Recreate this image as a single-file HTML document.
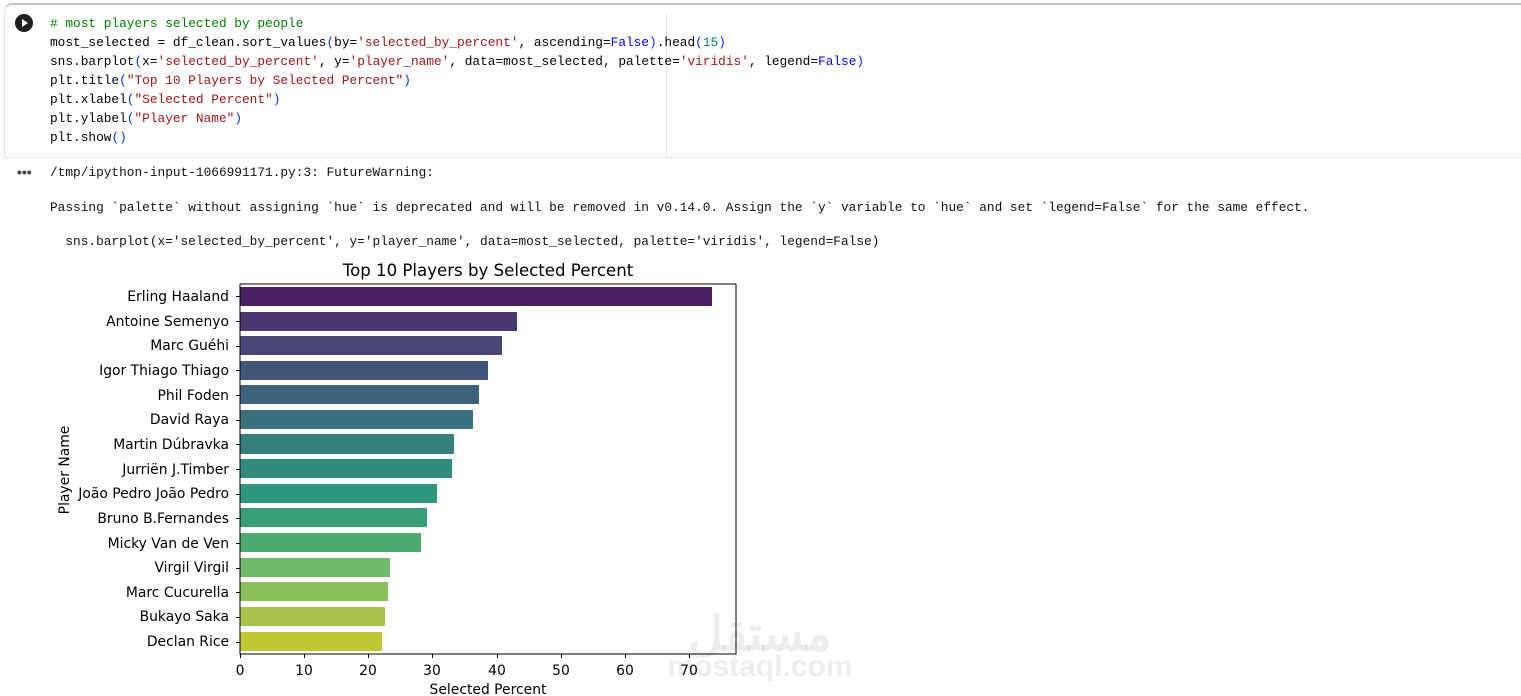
<!DOCTYPE html>
<html><head><meta charset="utf-8"><style>
body{margin:0;width:1521px;height:696px;background:#fff;overflow:hidden;position:relative;font-family:"Liberation Mono",monospace;}
.cell{position:absolute;left:4px;top:3px;width:1530px;height:154px;border-top:2px solid #c4c4c4;border-left:1px solid #e0e0e0;border-radius:8px 0 0 0;}
.sep{position:absolute;left:4px;top:157px;width:1517px;height:1px;background:#e3e3e3}
.vl{position:absolute;left:666px;top:14px;width:1px;height:143px;background:#e0e0e0}
.code{position:absolute;left:50px;top:14px;font-size:12.8px;line-height:19px;white-space:pre;color:#000}
.c{color:#008000}.s{color:#a31515}.k{color:#0000ff}.n{color:#098658}.p{color:#0431fa}
.out{position:absolute;left:50px;font-size:12.8px;white-space:pre;color:#111}
.run{position:absolute;left:15px;top:14px;width:18px;height:18px;border-radius:50%;background:#1f1f1f}
.run:after{content:"";position:absolute;left:7px;top:5px;border-left:6px solid #fff;border-top:4px solid transparent;border-bottom:4px solid transparent}
.dots{position:absolute;left:17px;top:164px;font-size:14px;color:#444;font-family:"Liberation Sans",sans-serif;font-weight:bold}
</style></head><body>
<div class="cell"></div><div class="sep"></div><div class="vl"></div>
<div class="run"></div>
<div class="code"><span class="c"># most players selected by people</span>
most_selected = df_clean.sort_values<span class="p">(</span>by=<span class="s">'selected_by_percent'</span>, ascending=<span class="k">False</span><span class="p">)</span>.head<span class="p">(</span><span class="n">15</span><span class="p">)</span>
sns.barplot<span class="p">(</span>x=<span class="s">'selected_by_percent'</span>, y=<span class="s">'player_name'</span>, data=most_selected, palette=<span class="s">'viridis'</span>, legend=<span class="k">False</span><span class="p">)</span>
plt.title<span class="p">(</span><span class="s">"Top 10 Players by Selected Percent"</span><span class="p">)</span>
plt.xlabel<span class="p">(</span><span class="s">"Selected Percent"</span><span class="p">)</span>
plt.ylabel<span class="p">(</span><span class="s">"Player Name"</span><span class="p">)</span>
plt.show<span class="p">()</span></div>
<div class="dots">•••</div>
<div class="out" style="top:165px">/tmp/ipython-input-1066991171.py:3: FutureWarning:</div>
<div class="out" style="top:200px">Passing `palette` without assigning `hue` is deprecated and will be removed in v0.14.0. Assign the `y` variable to `hue` and set `legend=False` for the same effect.</div>
<div class="out" style="top:234px">  sns.barplot(x='selected_by_percent', y='player_name', data=most_selected, palette='viridis', legend=False)</div>
<svg style="position:absolute;left:0;top:0" width="1521" height="696" font-family="DejaVu Sans, sans-serif" font-size="13.9" fill="#000">
<text x="488" y="276" font-size="16.6" text-anchor="middle">Top 10 Players by Selected Percent</text>
<g>
<rect x="240" y="287" width="472" height="19" fill="#4a2262"/>
<rect x="240" y="312" width="277" height="19" fill="#4a3671"/>
<rect x="240" y="336" width="262" height="19" fill="#494677"/>
<rect x="240" y="361" width="248" height="19" fill="#44557b"/>
<rect x="240" y="385" width="239" height="19" fill="#3e637c"/>
<rect x="240" y="410" width="233" height="19" fill="#3a717d"/>
<rect x="240" y="434" width="214" height="20" fill="#34807e"/>
<rect x="240" y="459" width="212" height="19" fill="#2f8b7d"/>
<rect x="240" y="484" width="197" height="19" fill="#2f977c"/>
<rect x="240" y="508" width="187" height="19" fill="#379f77"/>
<rect x="240" y="533" width="181" height="19" fill="#4eab70"/>
<rect x="240" y="558" width="150" height="19" fill="#6dba67"/>
<rect x="240" y="582" width="148" height="19" fill="#89c05c"/>
<rect x="240" y="607" width="145" height="19" fill="#a5c64a"/>
<rect x="240" y="632" width="142" height="19" fill="#c0c934"/>
</g>
<rect x="240" y="284" width="496" height="370" fill="none" stroke="#000" stroke-width="1"/>
<g text-anchor="end">
<text x="229" y="301">Erling Haaland</text>
<text x="229" y="326">Antoine Semenyo</text>
<text x="229" y="350">Marc Guéhi</text>
<text x="229" y="375">Igor Thiago Thiago</text>
<text x="229" y="400">Phil Foden</text>
<text x="229" y="424">David Raya</text>
<text x="229" y="449">Martin Dúbravka</text>
<text x="229" y="474">Jurriën J.Timber</text>
<text x="229" y="498">João Pedro João Pedro</text>
<text x="229" y="523">Bruno B.Fernandes</text>
<text x="229" y="548">Micky Van de Ven</text>
<text x="229" y="572">Virgil Virgil</text>
<text x="229" y="597">Marc Cucurella</text>
<text x="229" y="621">Bukayo Saka</text>
<text x="229" y="646">Declan Rice</text>
</g>
<g stroke="#000" stroke-width="1">
<path d="M236 296.5h4M236 321.5h4M236 346.5h4M236 370.5h4M236 395.5h4M236 420.5h4M236 444.5h4M236 469.5h4M236 494.5h4M236 518.5h4M236 543.5h4M236 568.5h4M236 592.5h4M236 617.5h4M236 642.5h4"/>
<path d="M240.5 654v4M304.5 654v4M368.5 654v4M432.5 654v4M497.5 654v4M561.5 654v4M625.5 654v4M689.5 654v4"/>
</g>
<g text-anchor="middle">
<text x="240" y="675">0</text><text x="304" y="675">10</text><text x="368" y="675">20</text><text x="432" y="675">30</text>
<text x="497" y="675">40</text><text x="561" y="675">50</text><text x="625" y="675">60</text><text x="689" y="675">70</text>
<text x="488" y="694">Selected Percent</text>
<text transform="translate(69,470) rotate(-90)">Player Name</text>
</g>
<text x="760" y="676" font-family="Liberation Sans, sans-serif" font-size="30" fill="#000" fill-opacity="0.07" font-weight="bold" text-anchor="middle">mostaql.com</text>
<text x="760" y="650" font-family="Noto Sans CJK SC, sans-serif" font-size="48" fill="#000" fill-opacity="0.07" font-weight="bold" text-anchor="middle">مستقل</text>
</svg>
</body></html>
